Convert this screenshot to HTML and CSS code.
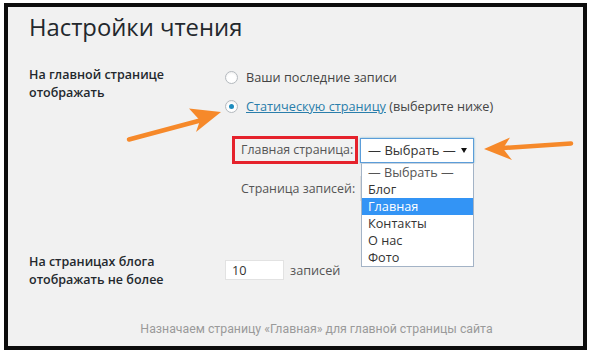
FILE: index.html
```html
<!DOCTYPE html>
<html lang="ru">
<head>
<meta charset="utf-8">
<title>Настройки чтения</title>
<link rel="stylesheet" href="styles.css">
</head>
<body>
<div class="frame">
  <h1 class="title">Настройки чтения</h1>

  <div class="form-row">
    <div class="th">На главной странице<br>отображать</div>
    <div class="td radios">
      <div class="radio-line"><span class="radio"></span><span class="rtext">Ваши последние записи</span></div>
      <div class="radio-line gap"><span class="radio checked"></span><span class="rtext"><span class="link">Статическую страницу</span> (выберите ниже)</span></div>
      <div class="pages">
        <span class="plabel boxed">Главная страница:</span>
        <div class="select-wrap">
          <div class="select"><span>— Выбрать —</span><svg class="caret" width="6" height="5" viewBox="0 0 6 5"><path d="M0 0H6L3 5Z" fill="#111"/></svg></div>
          <ul class="dropdown">
            <li class="muted">— Выбрать —</li>
            <li>Блог</li>
            <li class="active">Главная</li>
            <li>Контакты</li>
            <li>О нас</li>
            <li>Фото</li>
          </ul>
        </div>
        <span class="plabel plain">Страница записей:</span>
        <div class="select ghost"></div>
      </div>
    </div>
  </div>

  <div class="form-row blog-row">
    <div class="th">На страницах блога<br>отображать не более</div>
    <div class="td count">
      <span class="num">10</span><span class="unit">записей</span>
    </div>
  </div>

  <p class="caption">Назначаем страницу «Главная» для главной страницы сайта</p>
</div>

<svg class="arrows" width="591" height="354" viewBox="0 0 591 354">
  <line x1="129" y1="139.5" x2="202" y2="120" stroke="#f6892a" stroke-width="4.5" stroke-linecap="round"/>
  <polygon points="221,112 189,108.5 200,120.5 196,132" fill="#f6892a"/>
  <line x1="503" y1="148" x2="571" y2="143.5" stroke="#f6892a" stroke-width="4.5" stroke-linecap="round"/>
  <polygon points="484,149 510,137.5 503,148.5 512,160" fill="#f6892a"/>
</svg>
</body>
</html>
```

FILE: styles.css
```css
* { box-sizing: border-box; }

html, body {
  margin: 0;
  padding: 0;
  background: #ffffff;
}

body {
  width: 591px;
  height: 354px;
  position: relative;
  overflow: hidden;
  font-family: "Open Sans", "Noto Sans", sans-serif;
  font-size: 12.7px;
  color: #444;
}

.frame {
  margin: 3px 0 0 4px;
  width: 583px;
  height: 347px;
  border: 4px solid #0c0c0c;
  background: #f1f1f1;
  padding: 0 0 0 21px;
}

.title {
  margin: 5px 0 0 0;
  font-size: 23.8px;
  font-weight: 400;
  line-height: 30px;
  color: #23282d;
}

.form-row {
  display: grid;
  grid-template-columns: 196px 1fr;
  margin-top: 24px;
}

.th {
  font-size: 12.5px;
  font-weight: 600;
  line-height: 18px;
  color: #23282d;
}

.radios {
  padding-top: 2px;
}

.radio-line {
  display: flex;
  align-items: center;
  height: 18px;
  gap: 8px;
}

.radio-line.gap {
  margin-top: 11px;
}

.radio {
  width: 13px;
  height: 13px;
  border-radius: 50%;
  border: 1px solid #b4b9be;
  background: #fff;
  box-shadow: inset 0 1px 2px rgba(0, 0, 0, 0.07);
  display: flex;
  align-items: center;
  justify-content: center;
  flex: none;
}

.radio.checked::after {
  content: "";
  width: 5px;
  height: 5px;
  border-radius: 50%;
  background: #1e8cbe;
}

.rtext {
  white-space: nowrap;
  line-height: 18px;
}

.link {
  color: #2a7eab;
  text-decoration: underline;
}

.pages {
  display: grid;
  grid-template-columns: 126px 114px;
  column-gap: 2px;
  row-gap: 12px;
  align-items: center;
  margin: 21px 0 0 7px;
}

.plabel {
  color: #555;
  font-size: 12.4px;
  line-height: 18px;
  white-space: nowrap;
}

.plabel.boxed {
  border: 3px solid #e5222c;
  height: 28px;
  padding: 2px 0 0 6px;
}

.plabel.plain {
  padding-left: 9px;
}

.select-wrap {
  position: relative;
}

.select {
  height: 25px;
  width: 114px;
  border: 1px solid #5b9dd9;
  background: #fff;
  box-shadow: 0 0 2px rgba(30, 140, 190, 0.6);
  display: flex;
  align-items: center;
  justify-content: space-between;
  padding: 0 6px 0 7px;
  color: #333;
  font-size: 13px;
}

.select.ghost {
  box-shadow: none;
  border-color: #ddd;
}

.caret {
  display: block;
}

.dropdown {
  position: absolute;
  top: 25px;
  left: 1px;
  width: 113px;
  margin: 0;
  padding: 0;
  list-style: none;
  background: #fff;
  border: 1px solid #a3b3c6;
  border-top-color: #c9d3de;
  z-index: 2;
}

.dropdown li {
  height: 17px;
  line-height: 17px;
  padding-left: 6px;
  color: #333;
}

.dropdown li.muted {
  color: #555;
}

.dropdown li.active {
  background: #3394f5;
  color: #fff;
}

.blog-row {
  margin-top: 52px;
}

.count {
  display: flex;
  align-items: center;
  gap: 6px;
  padding-top: 7px;
  align-self: start;
}

.num {
  width: 59px;
  height: 20px;
  background: #fff;
  border: 1px solid #e2e2e2;
  padding-left: 6px;
  line-height: 18px;
  color: #333;
}

.unit {
  color: #555;
}

.caption {
  margin: 32px 0 0 0;
  padding-left: 21px;
  text-align: center;
  font-family: Roboto, "Liberation Sans", sans-serif;
  font-size: 12.3px;
  line-height: 16px;
  color: #9a9a9a;
}

.arrows {
  position: absolute;
  top: 0;
  left: 0;
  pointer-events: none;
  z-index: 5;
}
```
